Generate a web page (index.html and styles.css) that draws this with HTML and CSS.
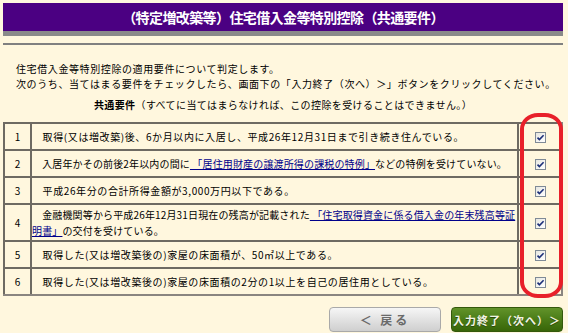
FILE: index.html
```html
<!DOCTYPE html>
<html lang="ja">
<head>
<meta charset="utf-8">
<title>住宅借入金等特別控除（共通要件）</title>
<link rel="stylesheet" href="styles.css">
</head>
<body>
<div class="page">
  <h1 class="title">（特定増改築等）住宅借入金等特別控除（共通要件）</h1>
  <hr class="rule">
  <p class="intro">住宅借入金等特別控除の適用要件について判定します。<br>次のうち、当てはまる要件をチェックしたら、画面下の「入力終了（次へ）＞」ボタンをクリックしてください。</p>
  <p class="subhead"><b>共通要件</b>（すべてに当てはまらなければ、この控除を受けることはできません。）</p>
  <table class="reqs">
    <tr>
      <td class="num">1</td>
      <td class="txt">　取得(又は増改築)後、6か月以内に入居し、平成26年12月31日まで引き続き住んでいる。</td>
      <td class="chk"><span class="cb"><svg viewBox="0 0 11 11" width="11" height="11"><path d="M2.5 5.6 L4.4 7.6 L8.6 3.2" fill="none" stroke="#1c2f78" stroke-width="1.6"/></svg></span></td>
    </tr>
    <tr>
      <td class="num">2</td>
      <td class="txt tight">　入居年かその前後2年以内の間に<a href="#" class="lnk"> 「居住用財産の譲渡所得の課税の特例」</a>などの特例を受けていない。</td>
      <td class="chk"><span class="cb"><svg viewBox="0 0 11 11" width="11" height="11"><path d="M2.5 5.6 L4.4 7.6 L8.6 3.2" fill="none" stroke="#1c2f78" stroke-width="1.6"/></svg></span></td>
    </tr>
    <tr>
      <td class="num">3</td>
      <td class="txt">　平成26年分の合計所得金額が3,000万円以下である。</td>
      <td class="chk"><span class="cb"><svg viewBox="0 0 11 11" width="11" height="11"><path d="M2.5 5.6 L4.4 7.6 L8.6 3.2" fill="none" stroke="#1c2f78" stroke-width="1.6"/></svg></span></td>
    </tr>
    <tr>
      <td class="num">4</td>
      <td class="txt tight">　金融機関等から平成26年12月31日現在の残高が記載された<a href="#" class="lnk"> 「住宅取得資金に係る借入金の年末残高等証明書」</a>の交付を受けている。</td>
      <td class="chk"><span class="cb"><svg viewBox="0 0 11 11" width="11" height="11"><path d="M2.5 5.6 L4.4 7.6 L8.6 3.2" fill="none" stroke="#1c2f78" stroke-width="1.6"/></svg></span></td>
    </tr>
    <tr>
      <td class="num">5</td>
      <td class="txt">　取得した(又は増改築後の)家屋の床面積が、50㎡以上である。</td>
      <td class="chk"><span class="cb"><svg viewBox="0 0 11 11" width="11" height="11"><path d="M2.5 5.6 L4.4 7.6 L8.6 3.2" fill="none" stroke="#1c2f78" stroke-width="1.6"/></svg></span></td>
    </tr>
    <tr>
      <td class="num">6</td>
      <td class="txt">　取得した(又は増改築後の)家屋の床面積の2分の1以上を自己の居住用としている。</td>
      <td class="chk"><span class="cb"><svg viewBox="0 0 11 11" width="11" height="11"><path d="M2.5 5.6 L4.4 7.6 L8.6 3.2" fill="none" stroke="#1c2f78" stroke-width="1.6"/></svg></span></td>
    </tr>
  </table>
  <div class="actions">
    <button class="btn back">＜ 戻る</button>
    <button class="btn next">入力終了（次へ）＞</button>
  </div>
  <div class="mark"></div>
</div>
</body>
</html>
```

FILE: styles.css
```css
* { box-sizing: border-box; }

body {
  margin: 0;
  background: #fff7de;
  font-family: "Noto Sans CJK JP", "Noto Sans", sans-serif;
  font-size: 10px;
  color: #000;
}

.page {
  position: relative;
  width: 560px;
  margin: 3px;
}

.title {
  margin: 0;
  height: 33px;
  line-height: 28px;
  background: #4b0082;
  color: #fff;
  font-size: 14px;
  font-weight: bold;
  text-align: center;
  letter-spacing: -0.6px;
  border-bottom: 5px solid #8a8a8a;
}

.rule {
  margin: 7px 0 0;
  height: 2px;
  border: 0;
  background: #808080;
}

.intro {
  margin: 16px 0 0 13px;
  line-height: 15px;
  letter-spacing: 0.6px;
}

.subhead {
  margin: 6px 0 0;
  line-height: 15px;
  text-align: center;
  letter-spacing: 0.4px;
}

.reqs {
  margin-top: 10px;
  width: 560px;
  border-collapse: separate;
  border-spacing: 0;
  border-right: 2px solid #8a8580;
  border-bottom: 2px solid #8a8580;
}

.reqs td {
  height: 27px;
  padding: 1.5px 0;
  line-height: 16px;
  border-top: 2px solid #6e6a62;
  border-left: 2px solid #6e6a62;
  vertical-align: middle;
}

.reqs .num {
  width: 27px;
  text-align: center;
}

.reqs .txt {
  width: 487px;
  padding-left: 0;
  padding-right: 1px;
  letter-spacing: 0.6px;
}

.reqs .txt.tight {
  letter-spacing: 0.15px;
}

.reqs .chk {
  width: 44px;
  text-align: center;
}

.lnk {
  color: #00008b;
  text-decoration: underline;
}

.cb {
  display: inline-block;
  width: 11px;
  height: 11px;
  vertical-align: middle;
  border: 1px solid #7f8a96;
  background: linear-gradient(135deg, #e6e6e0, #ffffff);
  position: relative;
}

.cb svg {
  position: absolute;
  left: -1px;
  top: -1px;
}

.actions {
  display: flex;
  justify-content: flex-end;
  gap: 10px;
  margin-top: 11px;
}

.btn {
  width: 112px;
  height: 25px;
  border-radius: 4px;
  font-family: "Noto Sans CJK JP", sans-serif;
  font-weight: bold;
  padding: 0;
  cursor: pointer;
}

.back {
  background: linear-gradient(#f6f6f6, #e2e2e2 50%, #cfcfcf);
  border: 1px solid #a9a9a9;
  color: #6a6a6a;
  font-size: 12px;
  letter-spacing: 3px;
}

.next {
  background: linear-gradient(#62932a, #4a7c17 50%, #386508);
  border: 1px solid #34590c;
  color: #f2f4e4;
  font-size: 11px;
  letter-spacing: 1px;
  text-shadow: 0 1px 0 #2a4a08;
}

.mark {
  position: absolute;
  left: 517px;
  top: 110px;
  width: 43px;
  height: 185px;
  border: 4px solid #e8202a;
  border-radius: 18px / 16px;
  pointer-events: none;
}
```
